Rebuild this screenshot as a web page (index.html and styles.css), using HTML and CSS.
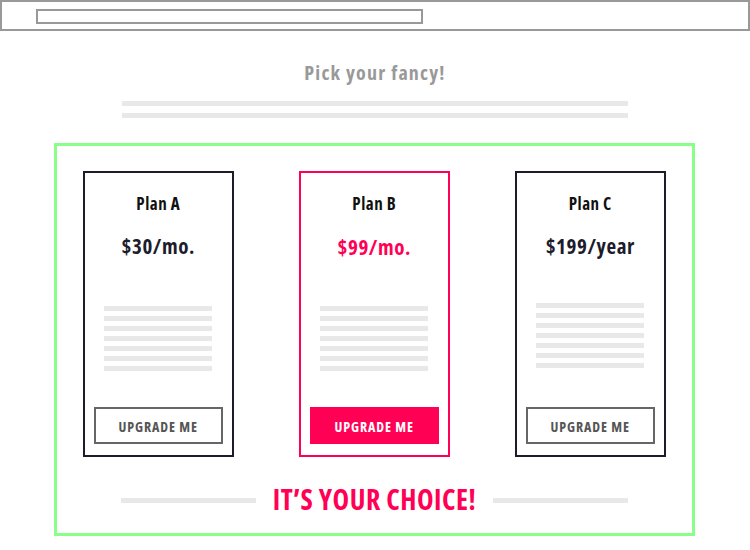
FILE: index.html
```html
<!DOCTYPE html>
<html>
<head>
<meta charset="utf-8">
<link rel="stylesheet" href="styles.css">
</head>
<body>
<div class="topbar"><div class="urlbox"></div></div>
<h1 class="title">Pick your fancy!</h1>
<div class="bars"><div class="bar"></div><div class="bar"></div></div>
<section class="pricing">
  <div class="cards">
    <div class="card">
      <div class="plan">Plan A</div>
      <div class="price">$30/mo.</div>
      <div class="lines"><i></i><i></i><i></i><i></i><i></i><i></i><i></i></div>
      <button class="btn">UPGRADE ME</button>
    </div>
    <div class="card featured">
      <div class="plan">Plan B</div>
      <div class="price">$99/mo.</div>
      <div class="lines"><i></i><i></i><i></i><i></i><i></i><i></i><i></i></div>
      <button class="btn">UPGRADE ME</button>
    </div>
    <div class="card third">
      <div class="plan">Plan C</div>
      <div class="price">$199/year</div>
      <div class="lines"><i></i><i></i><i></i><i></i><i></i><i></i><i></i></div>
      <button class="btn">UPGRADE ME</button>
    </div>
  </div>
  <div class="choice">
    <span class="rule"></span>
    <span class="choice-text">IT’S YOUR CHOICE!</span>
    <span class="rule"></span>
  </div>
</section>
</body>
</html>
```
FILE: styles.css
```css
* { box-sizing: border-box; }
body {
  margin: 0;
  width: 750px;
  height: 550px;
  background: #fff;
  font-family: "Open Sans", "Liberation Sans", sans-serif;
  font-stretch: 75%;
}
.topbar {
  height: 31px;
  border: 2px solid #999;
  padding: 7px 34px;
}
.urlbox {
  width: 387px;
  height: 15px;
  border: 2px solid #999;
}
.title {
  margin: 30px 0 0;
  text-align: center;
  font-size: 20px;
  font-weight: bold;
  letter-spacing: 1.2px;
  color: #999;
  line-height: 24px;
}
.bars {
  margin: 16px 122px 0;
  display: flex;
  flex-direction: column;
  gap: 7px;
}
.bar { height: 5px; background: #e8e8e8; }
.pricing {
  margin: 25px 0 0 54px;
  width: 641px;
  height: 393px;
  border: 3px solid #88ff88;
  padding: 25px 26px 0;
}
.cards {
  display: flex;
  gap: 65.5px;
}
.card {
  width: 150.5px;
  height: 286px;
  border: 2px solid #1c1c2c;
  display: flex;
  flex-direction: column;
  align-items: center;
  padding: 20px 8px 0;
}
.card.featured { border-color: #ff0055; }
.plan {
  height: 22px;
  font-size: 17px;
  font-weight: bold;
  letter-spacing: 0.5px;
  color: #111;
  line-height: 22px;
}
.price {
  margin-top: 18px;
  height: 26px;
  font-size: 21px;
  font-weight: bold;
  letter-spacing: 0.6px;
  color: #1c1c2c;
  line-height: 26px;
  margin-bottom: 1px;
}
.featured .price { color: #ff0055; position: relative; top: 1px; }
.lines {
  margin-top: 46px;
  width: 108px;
  display: flex;
  flex-direction: column;
  gap: 5px;
}
.third .lines { margin-top: 43px; margin-bottom: 3px; }
.lines i { display: block; height: 5px; background: #e8e8e8; }
.btn {
  margin-top: 36px;
  width: 129px;
  height: 37px;
  border: 2px solid #666;
  background: #fff;
  color: #555;
  font-family: inherit;
  font-stretch: 75%;
  font-size: 14px;
  font-weight: bold;
  letter-spacing: 0.9px;
  padding: 2px 0 0;
}
.featured .btn {
  background: #ff0055;
  border-color: #ff0055;
  color: #fff;
}
.choice {
  margin-top: 26px;
  display: flex;
  align-items: center;
  justify-content: center;
  gap: 17px;
}
.rule { width: 135px; height: 5px; background: #e8e8e8; position: relative; top: 1px; }
.choice-text {
  font-size: 28px;
  font-weight: bold;
  letter-spacing: 0.5px;
  color: #ff0055;
  line-height: 32px;
}
```
